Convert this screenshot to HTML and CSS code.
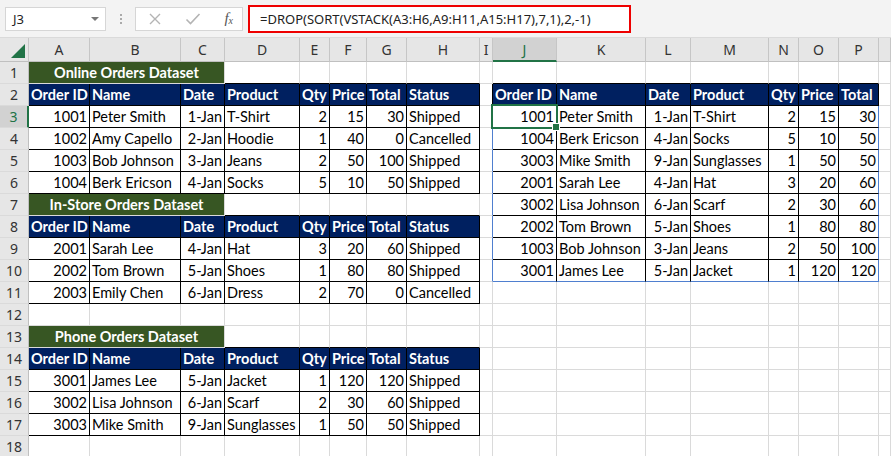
FILE: index.html
```html
<!DOCTYPE html>
<html lang="en">
<head>
    <meta charset="UTF-8">
    <title>DROP SORT VSTACK</title>
    <link rel="stylesheet" href="styles.css">
</head>
<body>
    <div class="bar">
        <div class="namebox">
            <span>J3</span>
            <span class="arrow"></span>
        </div>
        <div class="dots"><i></i><i></i><i></i></div>
        <div class="fbuttons">
            <svg width="14" height="14" viewBox="0 0 14 14"><path d="M2 2L12 12M12 2L2 12" stroke="#b4b4b4" stroke-width="1.4" fill="none"/></svg>
            <svg width="16" height="14" viewBox="0 0 16 14"><path d="M1.5 7.5L5.5 11.5L14.5 2" stroke="#b4b4b4" stroke-width="1.6" fill="none"/></svg>
            <span class="fx">f<sub>x</sub></span>
        </div>
        <div class="formula">=DROP(SORT(VSTACK(A3:H6,A9:H11,A15:H17),7,1),2,-1)</div>
    </div>

    <table class="sheet">
        <colgroup>
            <col style="width:29px"><col style="width:61px"><col style="width:91px"><col style="width:44px">
            <col style="width:75px"><col style="width:30px"><col style="width:37px"><col style="width:40px">
            <col style="width:73px"><col style="width:13px"><col style="width:64px"><col style="width:89px">
            <col style="width:45px"><col style="width:78px"><col style="width:30px"><col style="width:40px">
            <col style="width:40px"><col style="width:12px">
        </colgroup>
        <tr class="cols">
            <th class="corner"><span class="tri"></span></th>
            <th>A</th><th>B</th><th>C</th><th>D</th><th>E</th><th>F</th><th>G</th><th>H</th>
            <th>I</th><th class="colsel">J</th><th>K</th><th>L</th><th>M</th><th>N</th><th>O</th><th>P</th><th></th>
        </tr>
        <tr>
            <td class="rh">1</td>
            <td class="ttl" colspan="3">Online Orders Dataset</td>
            <td class="bb"></td><td class="bb"></td><td class="bb"></td><td class="bb"></td><td class="bb"></td>
            <td></td>
            <td class="bb"></td><td class="bb"></td><td class="bb"></td><td class="bb"></td><td class="bb"></td><td class="bb"></td><td class="bb"></td>
            <td></td>
        </tr>
        <tr>
            <td class="rh">2</td>
            <td class="hd">Order ID</td><td class="hd">Name</td><td class="hd">Date</td><td class="hd">Product</td><td class="hd">Qty</td><td class="hd">Price</td><td class="hd">Total</td><td class="hd">Status</td>
            <td class="br"></td>
            <td class="hd">Order ID</td><td class="hd">Name</td><td class="hd">Date</td><td class="hd">Product</td><td class="hd">Qty</td><td class="hd">Price</td><td class="hd">Total</td>
            <td></td>
        </tr>
        <tr>
            <td class="rh rowsel">3</td>
            <td class="c n">1001</td><td class="c">Peter Smith</td><td class="c n">1-Jan</td><td class="c">T-Shirt</td><td class="c n">2</td><td class="c n">15</td><td class="c n">30</td><td class="c">Shipped</td>
            <td class="sp-l"></td>
            <td class="c n sel">1001</td><td class="c">Peter Smith</td><td class="c n">1-Jan</td><td class="c">T-Shirt</td><td class="c n">2</td><td class="c n">15</td><td class="c n sp-r">30</td>
            <td></td>
        </tr>
        <tr>
            <td class="rh">4</td>
            <td class="c n">1002</td><td class="c">Amy Capello</td><td class="c n">2-Jan</td><td class="c">Hoodie</td><td class="c n">1</td><td class="c n">40</td><td class="c n">0</td><td class="c">Cancelled</td>
            <td class="sp-l"></td>
            <td class="c n">1004</td><td class="c">Berk Ericson</td><td class="c n">4-Jan</td><td class="c">Socks</td><td class="c n">5</td><td class="c n">10</td><td class="c n sp-r">50</td>
            <td></td>
        </tr>
        <tr>
            <td class="rh">5</td>
            <td class="c n">1003</td><td class="c">Bob Johnson</td><td class="c n">3-Jan</td><td class="c">Jeans</td><td class="c n">2</td><td class="c n">50</td><td class="c n">100</td><td class="c">Shipped</td>
            <td class="sp-l"></td>
            <td class="c n">3003</td><td class="c">Mike Smith</td><td class="c n">9-Jan</td><td class="c">Sunglasses</td><td class="c n">1</td><td class="c n">50</td><td class="c n sp-r">50</td>
            <td></td>
        </tr>
        <tr>
            <td class="rh">6</td>
            <td class="c n">1004</td><td class="c">Berk Ericson</td><td class="c n">4-Jan</td><td class="c">Socks</td><td class="c n">5</td><td class="c n">10</td><td class="c n">50</td><td class="c">Shipped</td>
            <td class="sp-l"></td>
            <td class="c n">2001</td><td class="c">Sarah Lee</td><td class="c n">4-Jan</td><td class="c">Hat</td><td class="c n">3</td><td class="c n">20</td><td class="c n sp-r">60</td>
            <td></td>
        </tr>
        <tr>
            <td class="rh">7</td>
            <td class="ttl" colspan="3">In-Store Orders Dataset</td>
            <td class="bb"></td><td class="bb"></td><td class="bb"></td><td class="bb"></td><td class="bb"></td>
            <td class="sp-l"></td>
            <td class="c n">3002</td><td class="c">Lisa Johnson</td><td class="c n">6-Jan</td><td class="c">Scarf</td><td class="c n">2</td><td class="c n">30</td><td class="c n sp-r">60</td>
            <td></td>
        </tr>
        <tr>
            <td class="rh">8</td>
            <td class="hd">Order ID</td><td class="hd">Name</td><td class="hd">Date</td><td class="hd">Product</td><td class="hd">Qty</td><td class="hd">Price</td><td class="hd">Total</td><td class="hd">Status</td>
            <td class="sp-l"></td>
            <td class="c n">2002</td><td class="c">Tom Brown</td><td class="c n">5-Jan</td><td class="c">Shoes</td><td class="c n">1</td><td class="c n">80</td><td class="c n sp-r">80</td>
            <td></td>
        </tr>
        <tr>
            <td class="rh">9</td>
            <td class="c n">2001</td><td class="c">Sarah Lee</td><td class="c n">4-Jan</td><td class="c">Hat</td><td class="c n">3</td><td class="c n">20</td><td class="c n">60</td><td class="c">Shipped</td>
            <td class="sp-l"></td>
            <td class="c n">1003</td><td class="c">Bob Johnson</td><td class="c n">3-Jan</td><td class="c">Jeans</td><td class="c n">2</td><td class="c n">50</td><td class="c n sp-r">100</td>
            <td></td>
        </tr>
        <tr>
            <td class="rh">10</td>
            <td class="c n">2002</td><td class="c">Tom Brown</td><td class="c n">5-Jan</td><td class="c">Shoes</td><td class="c n">1</td><td class="c n">80</td><td class="c n">80</td><td class="c">Shipped</td>
            <td class="sp-l"></td>
            <td class="c n sp-b">3001</td><td class="c sp-b">James Lee</td><td class="c n sp-b">5-Jan</td><td class="c sp-b">Jacket</td><td class="c n sp-b">1</td><td class="c n sp-b">120</td><td class="c n sp-r sp-b">120</td>
            <td></td>
        </tr>
        <tr>
            <td class="rh">11</td>
            <td class="c n">2003</td><td class="c">Emily Chen</td><td class="c n">6-Jan</td><td class="c">Dress</td><td class="c n">2</td><td class="c n">70</td><td class="c n">0</td><td class="c">Cancelled</td>
            <td></td>
            <td></td><td></td><td></td><td></td><td></td><td></td><td></td>
            <td></td>
        </tr>
        <tr>
            <td class="rh">12</td>
            <td></td><td></td><td></td><td></td><td></td><td></td><td></td><td></td>
            <td></td>
            <td></td><td></td><td></td><td></td><td></td><td></td><td></td>
            <td></td>
        </tr>
        <tr>
            <td class="rh">13</td>
            <td class="ttl" colspan="3">Phone Orders Dataset</td>
            <td class="bb"></td><td class="bb"></td><td class="bb"></td><td class="bb"></td><td class="bb"></td>
            <td></td>
            <td></td><td></td><td></td><td></td><td></td><td></td><td></td>
            <td></td>
        </tr>
        <tr>
            <td class="rh">14</td>
            <td class="hd">Order ID</td><td class="hd">Name</td><td class="hd">Date</td><td class="hd">Product</td><td class="hd">Qty</td><td class="hd">Price</td><td class="hd">Total</td><td class="hd">Status</td>
            <td></td>
            <td></td><td></td><td></td><td></td><td></td><td></td><td></td>
            <td></td>
        </tr>
        <tr>
            <td class="rh">15</td>
            <td class="c n">3001</td><td class="c">James Lee</td><td class="c n">5-Jan</td><td class="c">Jacket</td><td class="c n">1</td><td class="c n">120</td><td class="c n">120</td><td class="c">Shipped</td>
            <td></td>
            <td></td><td></td><td></td><td></td><td></td><td></td><td></td>
            <td></td>
        </tr>
        <tr>
            <td class="rh">16</td>
            <td class="c n">3002</td><td class="c">Lisa Johnson</td><td class="c n">6-Jan</td><td class="c">Scarf</td><td class="c n">2</td><td class="c n">30</td><td class="c n">60</td><td class="c">Shipped</td>
            <td></td>
            <td></td><td></td><td></td><td></td><td></td><td></td><td></td>
            <td></td>
        </tr>
        <tr>
            <td class="rh">17</td>
            <td class="c n">3003</td><td class="c">Mike Smith</td><td class="c n">9-Jan</td><td class="c">Sunglasses</td><td class="c n">1</td><td class="c n">50</td><td class="c n">50</td><td class="c">Shipped</td>
            <td></td>
            <td></td><td></td><td></td><td></td><td></td><td></td><td></td>
            <td></td>
        </tr>
        <tr>
            <td class="rh">18</td>
            <td></td><td></td><td></td><td></td><td></td><td></td><td></td><td></td>
            <td></td>
            <td></td><td></td><td></td><td></td><td></td><td></td><td></td>
            <td></td>
        </tr>
    </table>
</body>
</html>
```

FILE: styles.css
```css
body {
    margin: 0;
    background-color: #ffffff;
    font-family: Lato, "Noto Sans", sans-serif;
    overflow: hidden;
}
.bar {
    display: flex;
    align-items: center;
    height: 37px;
    padding-left: 5px;
    background-color: #f3f3f3;
    border-bottom: 1px solid #dadada;
    font-family: "Noto Sans", sans-serif;
}
.namebox {
    box-sizing: border-box;
    width: 101px;
    height: 24px;
    display: flex;
    align-items: center;
    justify-content: space-between;
    padding: 0 6px 0 7px;
    background-color: #ffffff;
    border: 1px solid #d6d6d6;
    font-size: 13px;
    color: #222;
}
.arrow {
    width: 0;
    height: 0;
    border-left: 4px solid transparent;
    border-right: 4px solid transparent;
    border-top: 4px solid #777;
}
.dots {
    display: flex;
    flex-direction: column;
    gap: 2px;
    margin: 0 13px 0 14px;
}
.dots i {
    width: 2px;
    height: 2px;
    background-color: #aaa;
}
.fbuttons {
    box-sizing: border-box;
    width: 108px;
    height: 24px;
    display: flex;
    align-items: center;
    justify-content: space-between;
    padding: 0 9px 0 12px;
    background-color: #ffffff;
    border: 1px solid #d6d6d6;
}
.fx {
    font-family: "Liberation Serif", serif;
    font-style: italic;
    font-size: 15px;
    color: #555;
    line-height: 1;
}
.fx sub {
    font-size: 10px;
    vertical-align: -1px;
}
.formula {
    box-sizing: border-box;
    width: 383px;
    height: 28px;
    margin-left: 5px;
    padding-left: 10px;
    display: flex;
    align-items: center;
    background-color: #ffffff;
    border: 2px solid #ee0000;
    font-size: 13px;
    color: #222;
    white-space: nowrap;
}
.sheet {
    table-layout: fixed;
    width: 891px;
    border-collapse: separate;
    border-spacing: 0;
    font-size: 14.5px;
    color: #000;
}
.sheet th,
.sheet td {
    box-sizing: border-box;
    padding: 0 2px;
    border-right: 1px solid #dadada;
    border-bottom: 1px solid #dadada;
    white-space: nowrap;
    overflow: hidden;
}
.sheet tr {
    height: 22px;
}
.sheet td {
    vertical-align: bottom;
    line-height: 20px;
}
.sheet tr.cols {
    height: 24px;
}
.cols th {
    background-color: #e6e6e6;
    border-right-color: #c6c6c6;
    border-bottom-color: #c0c0c0;
    font-family: "Noto Sans", sans-serif;
    font-weight: normal;
    font-size: 14px;
    color: #333;
    padding: 0;
    text-align: center;
}
.cols th.colsel {
    background-color: #d2d2d2;
    color: #217346;
    border-bottom: 2px solid #217346;
}
.corner {
    position: relative;
}
.tri {
    position: absolute;
    right: 3px;
    bottom: 3px;
    width: 0;
    height: 0;
    border-left: 14px solid transparent;
    border-bottom: 14px solid #217346;
}
.rh {
    background-color: #e6e6e6;
    border-right-color: #c0c0c0 !important;
    border-bottom-color: #d4d4d4;
    font-family: "Noto Sans", sans-serif;
    font-size: 14px;
    color: #333;
    text-align: center;
    padding: 0 !important;
}
.rh.rowsel {
    background-color: #d2d2d2;
    color: #217346;
    border-right: 2px solid #217346 !important;
}
.ttl {
    background-color: #375623;
    border-bottom-color: #375623;
    color: #ffffff;
    font-weight: bold;
    text-align: center;
}
.hd {
    background-color: #002060;
    border-right-color: #000 !important;
    border-bottom-color: #000 !important;
    color: #ffffff;
    font-weight: bold;
}
.c {
    border-right-color: #000 !important;
    border-bottom-color: #000 !important;
}
.n {
    text-align: right;
}
.bb {
    border-bottom-color: #000 !important;
}
.br {
    border-right-color: #000 !important;
}
.sp-l {
    border-right-color: #4f7fcf !important;
}
.sp-r {
    border-right-color: #4f7fcf !important;
}
.sp-b {
    border-bottom-color: #4f7fcf !important;
}
.sel {
    position: relative;
    overflow: visible !important;
}
.sel::after {
    content: "";
    position: absolute;
    top: -2px;
    left: -2px;
    right: -2px;
    bottom: -2px;
    border: 2px solid #217346;
}
.sel::before {
    content: "";
    position: absolute;
    right: -4px;
    bottom: -4px;
    width: 6px;
    height: 6px;
    background-color: #217346;
    border: 1px solid #ffffff;
    z-index: 1;
}
```
